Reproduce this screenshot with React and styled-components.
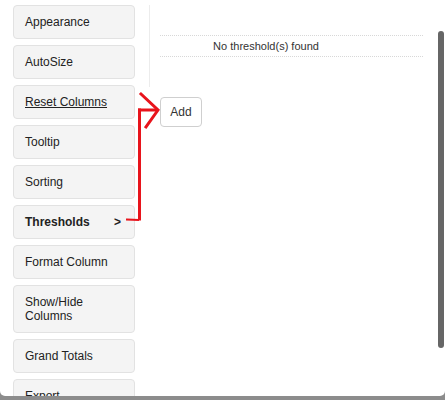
import React from 'react';
import styled, { createGlobalStyle } from 'styled-components';

const GlobalStyle = createGlobalStyle`
  html, body {
    margin: 0;
    padding: 0;
    background: #8c8c8c;
    overflow: hidden;
  }
  body {
    font-family: Arial, "Liberation Sans", sans-serif;
  }
`;

const Panel = styled.div`
  position: relative;
  width: 445px;
  height: 396px;
  background: #fff;
  border-radius: 0 0 5px 5px;
  overflow: hidden;
  display: flex;
`;

const Sidebar = styled.nav`
  width: 122px;
  padding: 5px 0 0 13px;
  display: flex;
  flex-direction: column;
  gap: 6px;
  flex-shrink: 0;
`;

const SideButton = styled.div`
  box-sizing: border-box;
  width: 122px;
  min-height: 34px;
  padding: 9px 11px;
  background: #f4f4f4;
  border: 1px solid #e2e2e2;
  border-radius: 4px;
  font-size: 12px;
  line-height: 14px;
  color: #222;
  display: flex;
  align-items: center;
  justify-content: space-between;
  flex-shrink: 0;
  font-weight: ${p => (p.$active ? 'bold' : 'normal')};
  text-decoration: ${p => (p.$link ? 'underline' : 'none')};
`;

const Chevron = styled.span`
  font-weight: bold;
  margin-right: 2px;
`;

const Divider = styled.div`
  width: 1px;
  height: 82px;
  margin: 5px 10px 0 14px;
  background: #ececec;
  flex-shrink: 0;
`;

const Content = styled.section`
  padding-top: 35px;
  display: flex;
  flex-direction: column;
  align-items: flex-start;
`;

const Table = styled.div`
  width: 263px;
  border-top: 1px dotted #d8d8d8;
  border-bottom: 1px dotted #d8d8d8;
  display: grid;
  grid-template-columns: 212px 51px;
`;

const Cell = styled.div`
  height: 20px;
  line-height: 20px;
  font-size: 11px;
  color: #333;
  text-align: center;
`;

const AddButton = styled.button`
  margin-top: 40px;
  width: 42px;
  height: 30px;
  padding: 0;
  background: #fff;
  border: 1px solid #cfcfcf;
  border-radius: 4px;
  font-family: Arial, "Liberation Sans", sans-serif;
  font-size: 12px;
  color: #333;
`;

const Scrollbar = styled.div`
  position: absolute;
  left: 438px;
  top: 31px;
  width: 6px;
  height: 317px;
  background: #666;
  border-radius: 3px;
`;

const Annotation = styled.svg`
  position: absolute;
  left: 0;
  top: 0;
  pointer-events: none;
`;

const items = [
  { label: 'Appearance' },
  { label: 'AutoSize' },
  { label: 'Reset Columns', link: true },
  { label: 'Tooltip' },
  { label: 'Sorting' },
  { label: 'Thresholds', active: true },
  { label: 'Format Column' },
  { label: 'Show/Hide Columns' },
  { label: 'Grand Totals' },
  { label: 'Export' },
];

const App = () => (
  <>
    <GlobalStyle />
    <Panel>
      <Sidebar>
        {items.map(item => (
          <SideButton key={item.label} $active={item.active} $link={item.link}>
            <span>{item.label}</span>
            {item.active && <Chevron>&gt;</Chevron>}
          </SideButton>
        ))}
      </Sidebar>
      <Divider />
      <Content>
        <Table>
          <Cell>No threshold(s) found</Cell>
          <Cell />
        </Table>
        <AddButton>Add</AddButton>
      </Content>
      <Scrollbar />
      <Annotation width="445" height="396">
        <g stroke="#e8141c" strokeWidth="3" fill="none" strokeLinecap="square">
          <path d="M139.5 110 L139.5 219" />
          <path d="M139.5 110 L156 110" />
          <path d="M141 94 L158 110 L146 127" />
          <path d="M127 219.5 L138 220" strokeWidth="2" />
        </g>
      </Annotation>
    </Panel>
  </>
);

export default App;
